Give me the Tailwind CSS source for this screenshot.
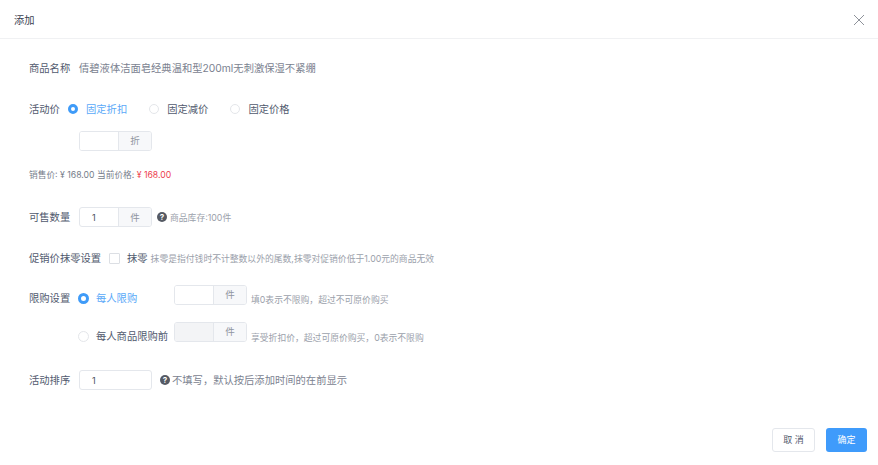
<!DOCTYPE html>
<html lang="zh-CN">
<head>
    <meta charset="UTF-8">
    <meta name="viewport" content="width=device-width, initial-scale=1.0">
    <title>添加</title>
    <script src="https://cdn.jsdelivr.net/npm/@tailwindcss/browser@4"></script>
</head>
<body class="w-[878px] h-[465px] overflow-hidden bg-white text-[10.3px] text-[#515a6e] font-['Inter','Noto_Sans_CJK_SC',sans-serif]">
    <!-- 标题栏 -->
    <header class="h-[39px] flex items-center justify-between pl-[14px] pr-[13px] border-b border-[#f0f1f3]">
        <span class="pt-[3px] text-[#3a4150]">添加</span>
        <svg class="mt-[2px] w-[12px] h-[12px]" viewBox="0 0 12 12" fill="none" stroke="#8e929a" stroke-width="1"><path d="M1 1l10 10M11 1L1 11"/></svg>
    </header>

    <main class="pl-[29px] pt-[19px]">
        <!-- 商品名称 -->
        <div class="h-[20px] flex items-center">
            <span class="w-[50px] pt-[2px]">商品名称</span>
            <span class="pt-[2px] text-[#7b8290]">倩碧液体洁面皂经典温和型200ml无刺激保湿不紧绷</span>
        </div>

        <!-- 活动价 -->
        <div class="h-[20px] mt-[21px] flex items-center">
            <span class="w-[39px] pt-[2px]">活动价</span>
            <span class="w-[10px] h-[10px] rounded-full border-[3px] border-[#3f9bf8] bg-white"></span>
            <span class="ml-[8px] pt-[2px] text-[#5aa9f8]">固定折扣</span>
            <span class="ml-[22px] w-[10px] h-[10px] rounded-full border border-[#e4e6ea]"></span>
            <span class="ml-[8px] pt-[2px]">固定减价</span>
            <span class="ml-[22px] w-[10px] h-[10px] rounded-full border border-[#e4e6ea]"></span>
            <span class="ml-[8px] pt-[2px]">固定价格</span>
        </div>

        <div class="mt-[12px] ml-[50px] flex w-[73px] h-[20px] border border-[#e4e7ec] rounded-[3px] overflow-hidden">
            <span class="flex-1 bg-white"></span>
            <span class="w-[33px] pt-[1px] flex items-center justify-center bg-[#f7f8fa] border-l border-[#e4e7ec] text-[#8f95a0] text-[9.5px]">折</span>
        </div>

        <p class="h-[20px] mt-[14px] pt-[2px] flex items-center text-[8.7px] text-[#767d8a]">销售价: ¥ 168.00 当前价格:&nbsp;<span class="text-[#ed3f4f]">¥ 168.00</span></p>

        <!-- 可售数量 -->
        <div class="h-[20px] mt-[22px] flex items-center">
            <span class="w-[50px] pt-[2px]">可售数量</span>
            <div class="flex w-[73px] h-[20px] border border-[#e4e7ec] rounded-[3px] overflow-hidden">
                <span class="flex-1 pt-[2px] flex items-center pl-[12px] text-[#4a5160] text-[9px]">1</span>
                <span class="w-[33px] pt-[2px] flex items-center justify-center bg-[#f7f8fa] border-l border-[#e4e7ec] text-[#8f95a0] text-[9.5px]">件</span>
            </div>
            <span class="ml-[5px] w-[10px] h-[10px] rounded-full bg-[#555a64] text-white text-[8px] font-bold leading-[10px] text-center">?</span>
            <span class="ml-[3px] pt-[2px] text-[8.8px] text-[#9ba1ab]">商品库存:100件</span>
        </div>

        <!-- 促销价抹零设置 -->
        <div class="h-[20px] mt-[21px] flex items-center">
            <span class="w-[80px] pt-[2px] whitespace-nowrap">促销价抹零设置</span>
            <span class="w-[11px] h-[11px] rounded-[1px] border border-[#dcdfe4]"></span>
            <span class="ml-[7px] pt-[2px]">抹零</span>
            <span class="ml-[3px] pt-[2px] text-[8.8px] text-[#9ba1ab]">抹零是指付钱时不计整数以外的尾数,抹零对促销价低于1.00元的商品无效</span>
        </div>

        <!-- 限购设置 -->
        <div class="h-[20px] mt-[17px] flex">
            <span class="w-[49px] mt-[3px] leading-[20px]">限购设置</span>
            <span class="mt-[8px] w-[11px] h-[11px] rounded-full border-[3px] border-[#3f9bf8] bg-white"></span>
            <span class="ml-[7px] w-[78px] mt-[3px] leading-[20px] text-[#5aa9f8]">每人限购</span>
            <div class="flex w-[73px] h-[20px] border border-[#e4e7ec] rounded-[3px] overflow-hidden">
                <span class="flex-1 bg-white"></span>
                <span class="w-[33px] flex items-center justify-center bg-[#f7f8fa] border-l border-[#e4e7ec] text-[#8f95a0] text-[9.5px]">件</span>
            </div>
            <span class="ml-[4px] mt-[5px] leading-[20px] text-[8.8px] text-[#9ba1ab]">填0表示不限购，超过不可原价购买</span>
        </div>

        <div class="h-[20px] mt-[17px] ml-[49px] flex">
            <span class="mt-[9px] w-[11px] h-[11px] rounded-full border border-[#e4e6ea]"></span>
            <span class="ml-[7px] w-[78px] mt-[4px] leading-[20px]">每人商品限购前</span>
            <div class="flex w-[73px] h-[20px] border border-[#e4e7ec] rounded-[3px] overflow-hidden">
                <span class="flex-1 bg-[#f3f4f6]"></span>
                <span class="w-[33px] flex items-center justify-center bg-[#f7f8fa] border-l border-[#e4e7ec] text-[#8f95a0] text-[9.5px]">件</span>
            </div>
            <span class="ml-[4px] mt-[6px] leading-[20px] text-[8.8px] text-[#9ba1ab]">享受折扣价，超过可原价购买，0表示不限购</span>
        </div>

        <!-- 活动排序 -->
        <div class="h-[20px] mt-[28px] flex items-center">
            <span class="w-[50px] pt-[2px]">活动排序</span>
            <span class="w-[73px] h-[20px] pt-[2px] flex items-center pl-[12px] border border-[#e4e7ec] rounded-[3px] text-[#4a5160] text-[9px]">1</span>
            <span class="ml-[8px] w-[10px] h-[10px] rounded-full bg-[#555a64] text-white text-[8px] font-bold leading-[10px] text-center">?</span>
            <span class="ml-[2px] pt-[2px] text-[#7b8290]">不填写，默认按后添加时间的在前显示</span>
        </div>
    </main>

    <!-- 底部按钮 -->
    <footer class="mt-[38px] pr-[11px] flex justify-end gap-[11px]">
        <button class="w-[43px] h-[24px] border border-[#e4e7ec] rounded-[3px] bg-white text-[9px] text-[#515a6e]">取 消</button>
        <button class="w-[41px] h-[24px] rounded-[3px] bg-[#3f9bfb] text-[9px] text-white">确定</button>
    </footer>
</body>
</html>
